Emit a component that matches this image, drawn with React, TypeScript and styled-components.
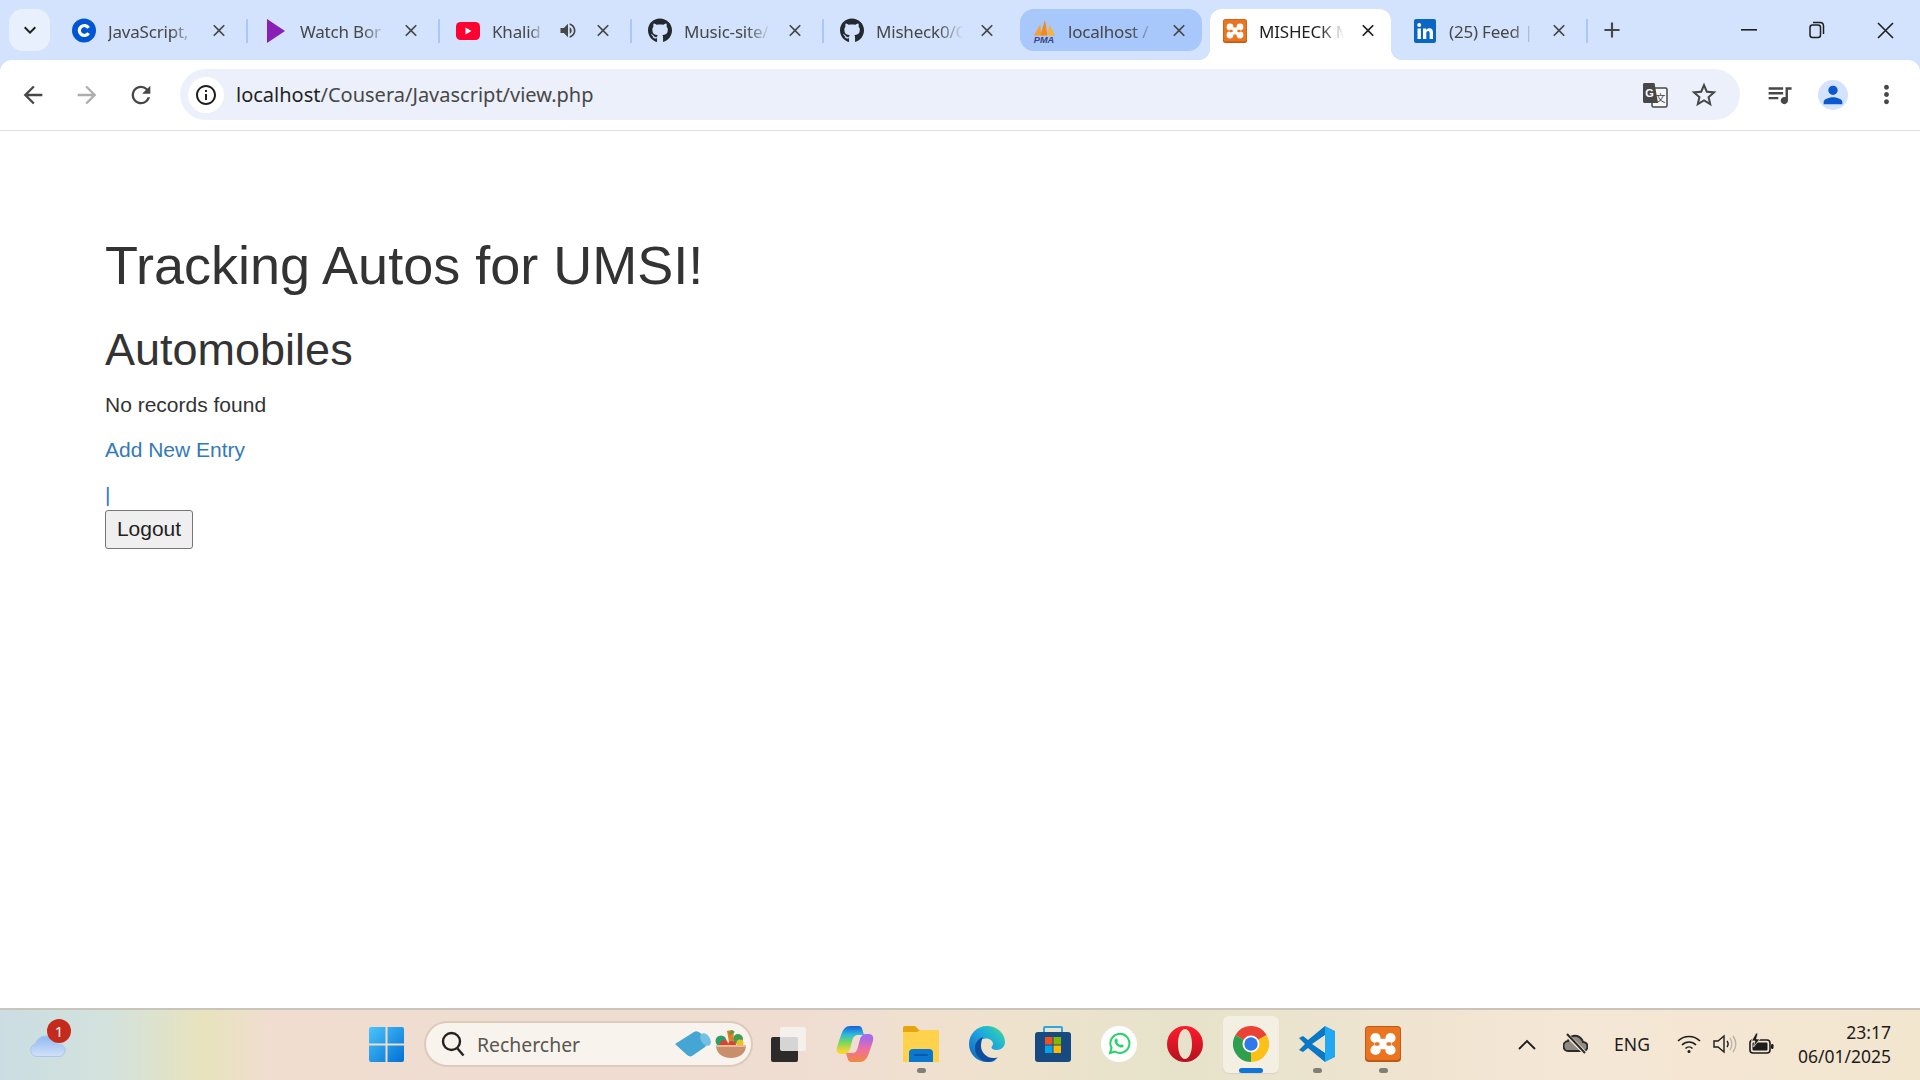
import React from 'react';
import styled, { createGlobalStyle } from 'styled-components';
import { FaGithub } from 'react-icons/fa';
import {
  MdArrowBack, MdArrowForward, MdRefresh, MdInfoOutline, MdStarBorder, MdClose, MdAdd,
  MdMoreVert, MdQueueMusic, MdPerson, MdVolumeUp, MdKeyboardArrowDown,
} from 'react-icons/md';

const Global = createGlobalStyle`
  html, body { margin: 0; padding: 0; background: #fff; overflow: hidden; }
  * { box-sizing: border-box; }
`;

const Screen = styled.div`
  width: 1920px;
  height: 1080px;
  display: grid;
  grid-template-rows: 60px 71px 1fr 72px;
  font-family: "Noto Sans", "Liberation Sans", sans-serif;
  overflow: hidden;
`;

/* ---------- tab strip ---------- */
const TabStrip = styled.div`
  display: flex;
  align-items: flex-end;
  background: #d3e3fd;
  padding-left: 9px;
`;
const ExpandButton = styled.div`
  width: 41px;
  height: 42px;
  margin: 0 5px 9px 0;
  border-radius: 14px;
  background: #e8f0fe;
  color: #1f1f1f;
  display: flex;
  align-items: center;
  justify-content: center;
  font-size: 24px;
`;
const Tab = styled.div<{ $divider?: boolean; $w: number }>`
  position: relative;
  width: ${p => p.$w}px;
  height: 51px;
  flex: none;
  &::after {
    content: '';
    display: ${p => (p.$divider ? 'block' : 'none')};
    position: absolute;
    right: -1px;
    top: 10px;
    width: 2px;
    height: 24px;
    background: #a8c7fa;
  }
`;
const TabInner = styled.div<{ $state: 'idle' | 'hover' | 'active' }>`
  position: relative;
  margin: ${p => (p.$state === 'active' ? '0 5px 0 3px' : '0 5px')};
  height: ${p => (p.$state === 'active' ? '51px' : '42px')};
  padding: ${p => (p.$state === 'active' ? '0 13px 9px 13px' : '0 12.600px 0 12px')};
  display: flex;
  align-items: center;
  background: ${p => (p.$state === 'active' ? '#fff' : p.$state === 'hover' ? '#a8c7fa' : 'transparent')};
  border-radius: ${p => (p.$state === 'active' ? '12px 12px 0 0' : '14px')};
  ${p => p.$state === 'active' && `
    &::before, &::after {
      content: '';
      position: absolute;
      bottom: 0;
      width: 12px;
      height: 12px;
    }
    &::before { left: -12px; background: radial-gradient(circle at 0 0, transparent 12px, #fff 12.5px); }
    &::after { right: -12px; background: radial-gradient(circle at 100% 0, transparent 12px, #fff 12.5px); }
  `}
`;
const Favicon = styled.div`
  width: 24px;
  height: 24px;
  margin-top: 1px;
  flex: none;
  display: flex;
  align-items: center;
  justify-content: center;
  color: #24292f;
  font-size: 25px;
`;
const TabTitle = styled.div<{ $dark?: boolean }>`
  flex: 1;
  min-width: 0;
  margin: 2px 14px 0 12px;
  font-size: 17px;
  letter-spacing: -0.2px;
  color: ${p => (p.$dark ? '#1f1f1f' : '#474747')};
  white-space: nowrap;
  -webkit-mask-image: linear-gradient(to right, #000 72%, transparent 100%);
  mask-image: linear-gradient(to right, #000 72%, transparent 100%);
`;
const TabAudio = styled.div`
  width: 20px;
  margin-right: 15px;
  flex: none;
  display: flex;
  justify-content: center;
  font-size: 21px;
  color: #474747;
`;
const TabClose = styled.div<{ $dark?: boolean }>`
  width: 20px;
  flex: none;
  display: flex;
  justify-content: center;
  font-size: 21px;
  color: ${p => (p.$dark ? '#1f1f1f' : '#474747')};
`;
const NewTab = styled.div`
  width: 48px;
  height: 42px;
  margin: 0 0 9px 1px;
  display: flex;
  align-items: center;
  justify-content: center;
  font-size: 26px;
  color: #474747;
`;
const WindowControls = styled.div`
  margin-left: auto;
  padding-right: 1px;
  align-self: stretch;
  display: flex;
`;
const WindowButton = styled.div`
  width: 68px;
  display: flex;
  align-items: center;
  justify-content: center;
`;

/* ---------- toolbar ---------- */
const ToolbarBack = styled.div`
  background: #d3e3fd;
`;
const Toolbar = styled.div`
  height: 70px;
  padding: 0 0 1px 6px;
  background: #fff;
  border-radius: 12px 12px 0 0;
  display: flex;
  align-items: center;
`;
const ToolbarRule = styled.div`
  height: 1px;
  background: #e0e0e0;
`;
const NavButton = styled.div<{ $off?: boolean }>`
  width: 54px;
  flex: none;
  display: flex;
  justify-content: center;
  font-size: 28px;
  color: ${p => (p.$off ? '#adadad' : '#474747')};
`;
const Omnibox = styled.div`
  flex: 1;
  margin-left: 12px;
  height: 51px;
  padding: 0 12px 0 8px;
  border-radius: 26px;
  background: #ebf0fa;
  display: flex;
  align-items: center;
`;
const InfoChip = styled.div`
  width: 36px;
  height: 36px;
  border-radius: 50%;
  background: #fff;
  color: #1f1f1f;
  font-size: 24px;
  display: flex;
  align-items: center;
  justify-content: center;
`;
const Url = styled.div`
  flex: 1;
  margin-left: 12px;
  font-size: 20px;
  color: #474747;
  white-space: nowrap;
`;
const UrlHost = styled.span`
  color: #1f1f1f;
`;
const OmniAction = styled.div`
  width: 49px;
  display: flex;
  justify-content: center;
  font-size: 30px;
  color: #474747;
`;
const ToolbarRight = styled.div`
  width: 180px;
  flex: none;
  padding-left: 13px;
  display: flex;
  align-items: center;
`;
const ToolButton = styled.div`
  width: 53.5px;
  display: flex;
  justify-content: center;
  font-size: 29px;
  color: #474747;
`;
const Avatar = styled.div`
  width: 30px;
  height: 30px;
  border-radius: 50%;
  background: #d3e3fd;
  color: #0b57d0;
  display: flex;
  align-items: center;
  justify-content: center;
  font-size: 28px;
`;

/* ---------- page ---------- */
const Page = styled.main`
  padding: 105px 0 0 105px;
  background: #fff;
  font-family: "Liberation Sans", Arial, sans-serif;
  font-size: 21px;
  line-height: 30px;
  color: #333;
`;
const Title = styled.h1`
  margin: 0 0 30px;
  font-size: 54px;
  font-weight: 400;
  line-height: 59.4px;
`;
const SubTitle = styled.h2`
  margin: 0 0 15px;
  font-size: 45px;
  font-weight: 400;
  line-height: 49.5px;
`;
const Para = styled.p`
  margin: 0 0 15px;
`;
const Anchor = styled.a`
  color: #337ab7;
  text-decoration: none;
`;
const LogoutRow = styled.div`
  color: #337ab7;
`;
const LogoutButton = styled.button`
  display: block;
  width: 88px;
  height: 39px;
  padding: 0;
  font: 21px "Liberation Sans", Arial, sans-serif;
  color: #222;
  background: #efefef;
  border: 1px solid #767676;
  border-radius: 3px;
`;

/* ---------- taskbar ---------- */
const Taskbar = styled.footer`
  display: flex;
  align-items: center;
  padding-bottom: 2px;
  border-top: 2px solid #c9c5bb;
  background: linear-gradient(90deg, #cbdde3 0, #d3e2dc 110px, #e8e3bd 205px, #f0ddd0 270px, #efddd2 800px, #efe2cd 1000px, #e6e3ca 1180px, #efe4d0 1400px, #f5e7d6 1560px, #f3e6cf 1920px);
`;
const WeatherArea = styled.div`
  width: 369px;
  flex: none;
  padding-left: 30px;
`;
const WeatherIcon = styled.div`
  position: relative;
  width: 38px;
  height: 24px;
  margin-top: 2px;
`;
const Badge = styled.span`
  position: absolute;
  left: 17px;
  top: -14px;
  width: 24px;
  height: 24px;
  border-radius: 50%;
  background: #c42b1c;
  color: #fff;
  font-size: 15px;
  line-height: 24px;
  text-align: center;
`;
const StartButton = styled.div`
  width: 35px;
  height: 35px;
  flex: none;
`;
const SearchPill = styled.div`
  width: 329px;
  height: 46px;
  margin: 0 3px 0 20px;
  padding: 0 4px 0 15px;
  flex: none;
  border-radius: 23px;
  background: #f9f3ed;
  border: 2px solid #dccabc;
  display: flex;
  align-items: center;
`;
const SearchIcon = styled.div`
  line-height: 0;
`;
const SearchText = styled.div`
  flex: 1;
  margin-left: 12px;
  font-size: 19.400px;
  color: #5a5651;
`;
const AppSlot = styled.div<{ $active?: boolean }>`
  position: relative;
  width: 66px;
  height: 57px;
  flex: none;
  display: flex;
  align-items: center;
  justify-content: center;
  &::before {
    content: '';
    display: ${p => (p.$active ? 'block' : 'none')};
    position: absolute;
    inset: 0 5px 0 5px;
    border-radius: 6px;
    background: #f3efe3;
    box-shadow: 0 1px 1px #d8d3c6;
  }
  svg { position: relative; }
`;
const RunDot = styled.span<{ $active?: boolean }>`
  position: absolute;
  left: 50%;
  bottom: 0;
  width: ${p => (p.$active ? '24px' : '9px')};
  height: 5px;
  margin-left: ${p => (p.$active ? '-12px' : '-4.5px')};
  border-radius: 3px;
  background: ${p => (p.$active ? '#0f76d8' : '#7f7f78')};
`;
const Tray = styled.div`
  margin-left: auto;
  padding-right: 29px;
  display: flex;
  align-items: center;
  color: #1c1c1c;
`;
const TraySlot = styled.div<{ $w: number }>`
  width: ${p => p.$w}px;
  display: flex;
  justify-content: center;
  font-size: 17.500px;
`;
const Clock = styled.div`
  width: 106px;
  text-align: right;
  font-size: 17.500px;
  line-height: 24px;
  color: #1c1c1c;
`;

/* ---------- drawings ---------- */
const CourseraIcon = () => (
  <svg width="25" height="25" viewBox="0 0 24 24">
    <circle cx="12" cy="12" r="12" fill="#0056d2" />
    <path d="M16.600 14.600a5 5 0 1 1 0-5.200" fill="none" stroke="#fff" strokeWidth="3.200" />
  </svg>
);
const PlayIcon = () => (
  <svg width="22" height="26" viewBox="0 0 22 26"><path d="M2 1l18 12L2 25z" fill="#8a1fb8" /></svg>
);
const YoutubeIcon = () => (
  <svg width="24" height="18" viewBox="0 0 24 18">
    <rect width="24" height="18" rx="4.500" fill="#ff0033" />
    <path d="M9.500 5.500l6 3.500-6 3.500z" fill="#fff" />
  </svg>
);
const PmaIcon = () => (
  <svg width="26" height="28" viewBox="0 0 26 28">
    <path d="M2 19L9 7l1 12z" fill="#f7a12c" />
    <path d="M9 19l5-17 3 17z" fill="#f08a1d" />
    <path d="M16 19l3-12 6 12z" fill="#f9b040" />
    <text x="13" y="27" textAnchor="middle" fontFamily="Liberation Sans" fontSize="10" fontWeight="700" fontStyle="italic" fill="#3d4580">PMA</text>
  </svg>
);
const XamppIcon = ({ size = 24 }: { size?: number }) => (
  <svg width={size} height={size} viewBox="0 0 24 24">
    <rect width="24" height="24" rx="2.500" fill="#bf5a14" />
    <rect x=".6" y=".6" width="22.800" height="22" rx="2.200" fill="#ea7420" />
    <g fill="#fff">
      <circle cx="7" cy="8" r="3.400" />
      <circle cx="17" cy="8" r="3.400" />
      <circle cx="7" cy="16" r="3.400" />
      <circle cx="17" cy="16" r="3.400" />
      <rect x="6" y="8.500" width="12" height="7" />
    </g>
    <g fill="#ea7420">
      <rect x="6.200" y="10.800" width="3.600" height="2.400" rx="1.200" />
      <rect x="14.200" y="10.800" width="3.600" height="2.400" rx="1.200" />
    </g>
  </svg>
);
const LinkedinIcon = () => (
  <svg width="22" height="24" viewBox="0 0 22 24">
    <rect width="22" height="24" rx="2" fill="#0a66c2" />
    <rect x="3.500" y="9.500" width="3.400" height="10.500" fill="#fff" />
    <circle cx="5.200" cy="6" r="2" fill="#fff" />
    <path d="M9 9.500h3.200v1.500c.8-1.200 2-1.800 3.300-1.800 2.500 0 3.500 1.600 3.500 4.300V20h-3.400v-5.800c0-1.300-.4-2.100-1.500-2.100s-1.800.9-1.800 2.200V20H9z" fill="#fff" />
  </svg>
);
const RestoreGlyph = () => (
  <svg width="16" height="18" viewBox="0 0 16 18" fill="none" stroke="#1f1f1f" strokeWidth="1.500">
    <rect x="1" y="4" width="10.500" height="12.500" rx="2.500" />
    <path d="M4 1.500h7c2 0 3.500 1.500 3.500 3.500v8" />
  </svg>
);
const TranslateIcon = () => (
  <svg width="26" height="26" viewBox="0 0 26 26">
    <rect x="10" y="6" width="15" height="19" rx="1.500" fill="#f6f7fb" stroke="#474747" strokeWidth="1.500" />
    <path d="M1 2.500C1 1.500 1.800 1 2.500 1h10l3.500 20H2.500C1.700 21 1 20.300 1 19.500z" fill="#474747" />
    <text x="7.500" y="15" textAnchor="middle" fontFamily="Liberation Sans" fontSize="11" fontWeight="700" fill="#fff">G</text>
    <text x="18.500" y="20" textAnchor="middle" fontFamily="Noto Sans CJK SC" fontSize="10" fill="#474747">文</text>
  </svg>
);
const CloudIcon = () => (
  <svg width="37" height="24" viewBox="0 0 37 24">
    <defs>
      <linearGradient id="cl" x1="0" y1="0" x2="0" y2="1">
        <stop offset="0" stopColor="#8fbaf0" /><stop offset="1" stopColor="#d3e1f8" />
      </linearGradient>
    </defs>
    <path d="M7 23.500a6.500 6.500 0 0 1-1.500-12.800C7 6 11 3 16 3c5 0 9 3 10.500 8h3a6.300 6.300 0 0 1 0 12.500z" fill="url(#cl)" stroke="#a9c6ef" />
  </svg>
);
const WindowsLogo = () => (
  <svg width="35" height="35" viewBox="0 0 35 35">
    <defs>
      <linearGradient id="wl" x1="0" y1="0" x2="1" y2="1">
        <stop offset="0" stopColor="#4cc4fb" /><stop offset="1" stopColor="#0070d4" />
      </linearGradient>
    </defs>
    <path d="M0 2a2 2 0 0 1 2-2h14.500v16.500H0zM18.500 0H33a2 2 0 0 1 2 2v14.500H18.500zM0 18.500h16.500V35H2a2 2 0 0 1-2-2zM18.500 18.500H35V33a2 2 0 0 1-2 2H18.500z" fill="url(#wl)" />
  </svg>
);
const SearchGlass = () => (
  <svg width="24" height="26" viewBox="0 0 24 26" fill="none" stroke="#222" strokeWidth="2.400">
    <circle cx="10.500" cy="10.500" r="8.500" />
    <path d="M16.500 17.500l6 7" />
  </svg>
);
const SearchArt = () => (
  <svg width="72" height="28" viewBox="0 0 72 28">
    <path d="M0 14L19 2c3-2 6 0 10 5 3 5 3 8 1 10L17 26c-2 1-4 0-6-2z" fill="#45a6d3" />
    <ellipse cx="30.500" cy="9.500" rx="4.500" ry="7" transform="rotate(-35 30.500 9.500)" fill="#72c1e4" />
    <circle cx="46" cy="11" r="5.500" fill="#2f9e6a" />
    <circle cx="63" cy="9" r="5" fill="#3f9e55" />
    <path d="M52 1l4-1 3 1-1 11h-4z" fill="#e97a24" />
    <path d="M51 0l3 3 3-3 3 2-5 3z" fill="#4f9e4a" />
    <circle cx="49" cy="14" r="4" fill="#d8452e" />
    <circle cx="57" cy="15" r="4" fill="#d8452e" />
    <circle cx="65" cy="13" r="3.500" fill="#e9c21d" />
    <path d="M41 15h30c0 8-6 13-15 13S41 23 41 15z" fill="#c98f6c" />
    <path d="M41 15h30l-.3 2H41.300z" fill="#e6bb9b" />
  </svg>
);
const TaskViewIcon = () => (
  <svg width="36" height="36" viewBox="0 0 36 36">
    <rect x="0" y="11" width="27" height="25" rx="2" fill="#2d2b29" />
    <rect x="9" y="1" width="26" height="24" rx="2" fill="#f4f3f1" opacity=".85" />
  </svg>
);
const CopilotIcon = () => (
  <svg width="38" height="38" viewBox="0 0 38 38">
    <defs>
      <linearGradient id="cpa" x1="0" y1="0" x2="0" y2="1">
        <stop offset="0" stopColor="#1a5fd8" /><stop offset=".3" stopColor="#2bb8e0" /><stop offset=".6" stopColor="#7ed957" /><stop offset=".9" stopColor="#f6d435" />
      </linearGradient>
      <linearGradient id="cpb" x1="0" y1="0" x2="0" y2="1">
        <stop offset="0" stopColor="#f08a3c" /><stop offset=".45" stopColor="#f06fa0" /><stop offset=".85" stopColor="#a86ae8" />
      </linearGradient>
    </defs>
    <path d="M14 1h9c1.500 0 2.500 1 3 2.500L28 10h-6c-3 0-4.500 1.500-5.500 4.500L14 24c-1 3-3 5-6 5H5c-3.500 0-5-3-4-7l4-12C7 4 10 1 14 1z" fill="url(#cpa)" />
    <path d="M14 1h9c1.500 0 2.500 1 3 2.500L28 10h-6c-3 0-4.500 1.500-5.500 4.500L14 24c-1 3-3 5-6 5H5c-3.500 0-5-3-4-7l4-12C7 4 10 1 14 1z" fill="url(#cpb)" transform="rotate(180 19 19)" />
  </svg>
);
const ExplorerIcon = () => (
  <svg width="36" height="36" viewBox="0 0 36 36">
    <path d="M0 2a2 2 0 0 1 2-2h10l4 4h18a2 2 0 0 1 2 2v6H0z" fill="#e5a50e" />
    <path d="M0 6h14l3-2h19v32H0z" fill="#ffd24d" />
    <path d="M6 36v-9a4 4 0 0 1 4-4h16a4 4 0 0 1 4 4v9z" fill="#0a78cf" />
    <rect x="11" y="28" width="14" height="2" rx="1" fill="#0a5aa8" />
  </svg>
);
const EdgeIcon = () => (
  <svg width="36" height="36" viewBox="0 0 36 36">
    <defs>
      <linearGradient id="ed" x1="0" y1="1" x2="1" y2="0">
        <stop offset="0" stopColor="#0c62b4" /><stop offset=".5" stopColor="#1f9fe0" /><stop offset=".75" stopColor="#24c0c8" /><stop offset="1" stopColor="#6edb6a" />
      </linearGradient>
    </defs>
    <path d="M18 0C28 0 36 7 36 16c0 5-4 8-8.500 8-3 0-5-1-5-2.500 0-1 1.200-1.500 1.500-3.500.2-3-3-5.500-7-5.500-6 0-10 4.500-10 10 0 7 6 13 13 13 3.500 0 6-.7 8-2C25 36 21 36 18 36 8 36 0 28 0 18S8 0 18 0z" fill="url(#ed)" />
    <path d="M12 20c0 7 7 13 14 12 1 0 2-.5 3-1-2 3-6 5-10 5-8-1-13-7-13-14 0-5 3-9 8-11-1 2-2 5-2 9z" fill="#0d4f9e" />
  </svg>
);
const StoreIcon = () => (
  <svg width="36" height="36" viewBox="0 0 36 36">
    <path d="M9 6V2a1 1 0 0 1 1-1h16a1 1 0 0 1 1 1v4" fill="none" stroke="#2aa8e0" strokeWidth="2" />
    <rect y="6" width="36" height="30" rx="3" fill="#164a80" />
    <rect x="10" y="11" width="7.500" height="7.500" fill="#f25022" />
    <rect x="18.500" y="11" width="7.500" height="7.500" fill="#7fba00" />
    <rect x="10" y="19.500" width="7.500" height="7.500" fill="#00a4ef" />
    <rect x="18.500" y="19.500" width="7.500" height="7.500" fill="#ffb900" />
  </svg>
);
const WhatsappIcon = () => (
  <svg width="36" height="36" viewBox="0 0 36 36">
    <circle cx="18" cy="18" r="18" fill="#fff" />
    <path d="M9 27l1.500-5.200A9.500 9.500 0 1 1 14 25.500z" fill="none" stroke="#25d366" strokeWidth="2" />
    <path d="M14.500 13c.7-.7 1.500-.5 1.800.3l.5 1.200c.2.500 0 .9-.6 1.500.7 1.400 1.700 2.300 3 3 .6-.6 1-.8 1.500-.6l1.300.6c.7.300.9 1 .3 1.700-1 1.100-2.500 1.200-4 .4-2.100-1-3.700-2.700-4.500-4.700-.5-1.300-.3-2.500.7-3.400z" fill="#25d366" />
  </svg>
);
const OperaIcon = () => (
  <svg width="36" height="36" viewBox="0 0 36 36">
    <defs>
      <linearGradient id="op" x1="0" y1="0" x2="0" y2="1">
        <stop offset="0" stopColor="#ff1b2d" /><stop offset="1" stopColor="#b5101f" />
      </linearGradient>
    </defs>
    <path fillRule="evenodd" d="M18 0a18 18 0 1 1 0 36 18 18 0 0 1 0-36zm0 3c-4 0-7 6.500-7 15s3 15 7 15 7-6.500 7-15-3-15-7-15z" fill="url(#op)" />
  </svg>
);
const ChromeIcon = () => (
  <svg width="36" height="36" viewBox="0 0 36 36">
    <path d="M18 18L2.400 9A18 18 0 0 1 33.600 9z" fill="#ea4335" />
    <path d="M18 18L33.600 9A18 18 0 0 1 18 36z" fill="#fbc116" />
    <path d="M18 18L18 36A18 18 0 0 1 2.400 9z" fill="#2f9e4f" />
    <circle cx="18" cy="18" r="8.500" fill="#fff" />
    <circle cx="18" cy="18" r="6.700" fill="#2f79ec" />
  </svg>
);
const VscodeIcon = () => (
  <svg width="36" height="36" viewBox="0 0 36 36">
    <path d="M26 0l10 5v26l-10 5z" fill="#22a7f2" />
    <path d="M26 0v9L13 18l13 9v9L9 22l-5 4-4-2 6-6-6-6 4-2 5 4z" fill="#0a78c5" />
  </svg>
);

type TabInfo = {
  icon: React.ReactNode;
  title: string;
  width: number;
  state?: 'idle' | 'hover' | 'active';
  audio?: boolean;
  divider?: boolean;
};
const tabs: TabInfo[] = [
  { icon: <CourseraIcon />, title: 'JavaScript,', width: 192, divider: true },
  { icon: <PlayIcon />, title: 'Watch Bor', width: 192, divider: true },
  { icon: <YoutubeIcon />, title: 'Khalid', width: 192, audio: true, divider: true },
  { icon: <FaGithub />, title: 'Music-site/', width: 192, divider: true },
  { icon: <FaGithub />, title: 'Misheck0/C', width: 192 },
  { icon: <PmaIcon />, title: 'localhost /', width: 192, state: 'hover' },
  { icon: <XamppIcon />, title: 'MISHECK M', width: 189, state: 'active' },
  { icon: <LinkedinIcon />, title: '(25) Feed |', width: 191, divider: true },
];

const apps: { icon: React.ReactNode; dot?: boolean; active?: boolean }[] = [
  { icon: <TaskViewIcon /> },
  { icon: <CopilotIcon /> },
  { icon: <ExplorerIcon />, dot: true },
  { icon: <EdgeIcon /> },
  { icon: <StoreIcon /> },
  { icon: <WhatsappIcon /> },
  { icon: <OperaIcon /> },
  { icon: <ChromeIcon />, dot: true, active: true },
  { icon: <VscodeIcon />, dot: true },
  { icon: <XamppIcon size={36} />, dot: true },
];

export default function App() {
  return (
    <Screen>
      <Global />
      <TabStrip>
        <ExpandButton><MdKeyboardArrowDown /></ExpandButton>
        {tabs.map(t => (
          <Tab key={t.title} $divider={t.divider} $w={t.width}>
            <TabInner $state={t.state ?? 'idle'}>
              <Favicon>{t.icon}</Favicon>
              <TabTitle $dark={t.state === 'active'}>{t.title}</TabTitle>
              {t.audio && <TabAudio><MdVolumeUp /></TabAudio>}
              <TabClose $dark={t.state === 'active'}><MdClose /></TabClose>
            </TabInner>
          </Tab>
        ))}
        <NewTab><MdAdd /></NewTab>
        <WindowControls>
          <WindowButton>
            <svg width="16" height="2" viewBox="0 0 16 2"><rect width="16" height="1.600" fill="#1f1f1f" /></svg>
          </WindowButton>
          <WindowButton><RestoreGlyph /></WindowButton>
          <WindowButton>
            <svg width="17" height="17" viewBox="0 0 17 17"><path d="M1 1l15 15M16 1L1 16" stroke="#1f1f1f" strokeWidth="1.600" /></svg>
          </WindowButton>
        </WindowControls>
      </TabStrip>

      <ToolbarBack>
        <Toolbar>
          <NavButton><MdArrowBack /></NavButton>
          <NavButton $off><MdArrowForward /></NavButton>
          <NavButton><MdRefresh /></NavButton>
          <Omnibox>
            <InfoChip><MdInfoOutline /></InfoChip>
            <Url><UrlHost>localhost</UrlHost>/Cousera/Javascript/view.php</Url>
            <OmniAction><TranslateIcon /></OmniAction>
            <OmniAction><MdStarBorder /></OmniAction>
          </Omnibox>
          <ToolbarRight>
            <ToolButton><MdQueueMusic /></ToolButton>
            <ToolButton><Avatar><MdPerson /></Avatar></ToolButton>
            <ToolButton><MdMoreVert /></ToolButton>
          </ToolbarRight>
        </Toolbar>
        <ToolbarRule />
      </ToolbarBack>

      <Page>
        <Title>Tracking Autos for UMSI!</Title>
        <SubTitle>Automobiles</SubTitle>
        <Para>No records found</Para>
        <Para><Anchor href="#">Add New Entry</Anchor></Para>
        <LogoutRow>|</LogoutRow>
        <LogoutButton>Logout</LogoutButton>
      </Page>

      <Taskbar>
        <WeatherArea>
          <WeatherIcon>
            <CloudIcon />
            <Badge>1</Badge>
          </WeatherIcon>
        </WeatherArea>
        <StartButton><WindowsLogo /></StartButton>
        <SearchPill>
          <SearchIcon><SearchGlass /></SearchIcon>
          <SearchText>Rechercher</SearchText>
          <SearchArt />
        </SearchPill>
        {apps.map((a, i) => (
          <AppSlot key={i} $active={a.active}>
            {a.icon}
            {a.dot && <RunDot $active={a.active} />}
          </AppSlot>
        ))}
        <Tray>
          <TraySlot $w={48}>
            <svg width="18" height="11" viewBox="0 0 18 11" fill="none" stroke="#1c1c1c" strokeWidth="1.800"><path d="M1 10l8-8 8 8" /></svg>
          </TraySlot>
          <TraySlot $w={48}>
            <svg width="25" height="22" viewBox="0 0 25 22">
              <path d="M6 18a5 5 0 0 1-1-10c1-4 5-6 9-5 3 1 5 3 6 6a4.500 4.500 0 0 1 0 9z" fill="#8f8b82" stroke="#2b2b2b" strokeWidth="2" />
              <path d="M3 1l19 19" stroke="#f3e6d4" strokeWidth="4" />
              <path d="M4 1l18 19" stroke="#2b2b2b" strokeWidth="2" />
            </svg>
          </TraySlot>
          <TraySlot $w={66}>ENG</TraySlot>
          <TraySlot $w={48}>
            <svg width="24" height="20" viewBox="0 0 24 20" fill="none" stroke="#1c1c1c" strokeWidth="1.600">
              <path d="M1 7c6-6 16-6 22 0M5 11c4-4 10-4 14 0M8.500 14.500c2-2 5-2 7 0" />
              <circle cx="12" cy="17.500" r="1.500" fill="#1c1c1c" stroke="none" />
            </svg>
          </TraySlot>
          <TraySlot $w={24}>
            <svg width="24" height="20" viewBox="0 0 24 20" fill="none" strokeWidth="1.400">
              <path d="M1 7h4l6-5v16l-6-5H1z" stroke="#1c1c1c" />
              <path d="M14 7c1.500 2 1.500 4 0 6" stroke="#1c1c1c" />
              <path d="M17 4c2.500 4 2.500 8 0 12M20 2c3.500 5 3.500 11 0 16" stroke="#b8b3a8" />
            </svg>
          </TraySlot>
          <TraySlot $w={48}>
            <svg width="25" height="22" viewBox="0 0 25 22">
              <rect x="1" y="7" width="20" height="13" rx="3" fill="none" stroke="#1c1c1c" strokeWidth="1.600" />
              <rect x="3.500" y="9.500" width="15" height="8" rx="1" fill="#1c1c1c" />
              <rect x="22" y="11" width="2.500" height="5" rx="1.200" fill="#1c1c1c" />
              <path d="M7 0L2.500 8H6l-1.500 6L11 6H7.500L9 0z" fill="#1c1c1c" stroke="#f5e7d6" strokeWidth=".8" />
            </svg>
          </TraySlot>
          <Clock>23:17<br />06/01/2025</Clock>
        </Tray>
      </Taskbar>
    </Screen>
  );
}
